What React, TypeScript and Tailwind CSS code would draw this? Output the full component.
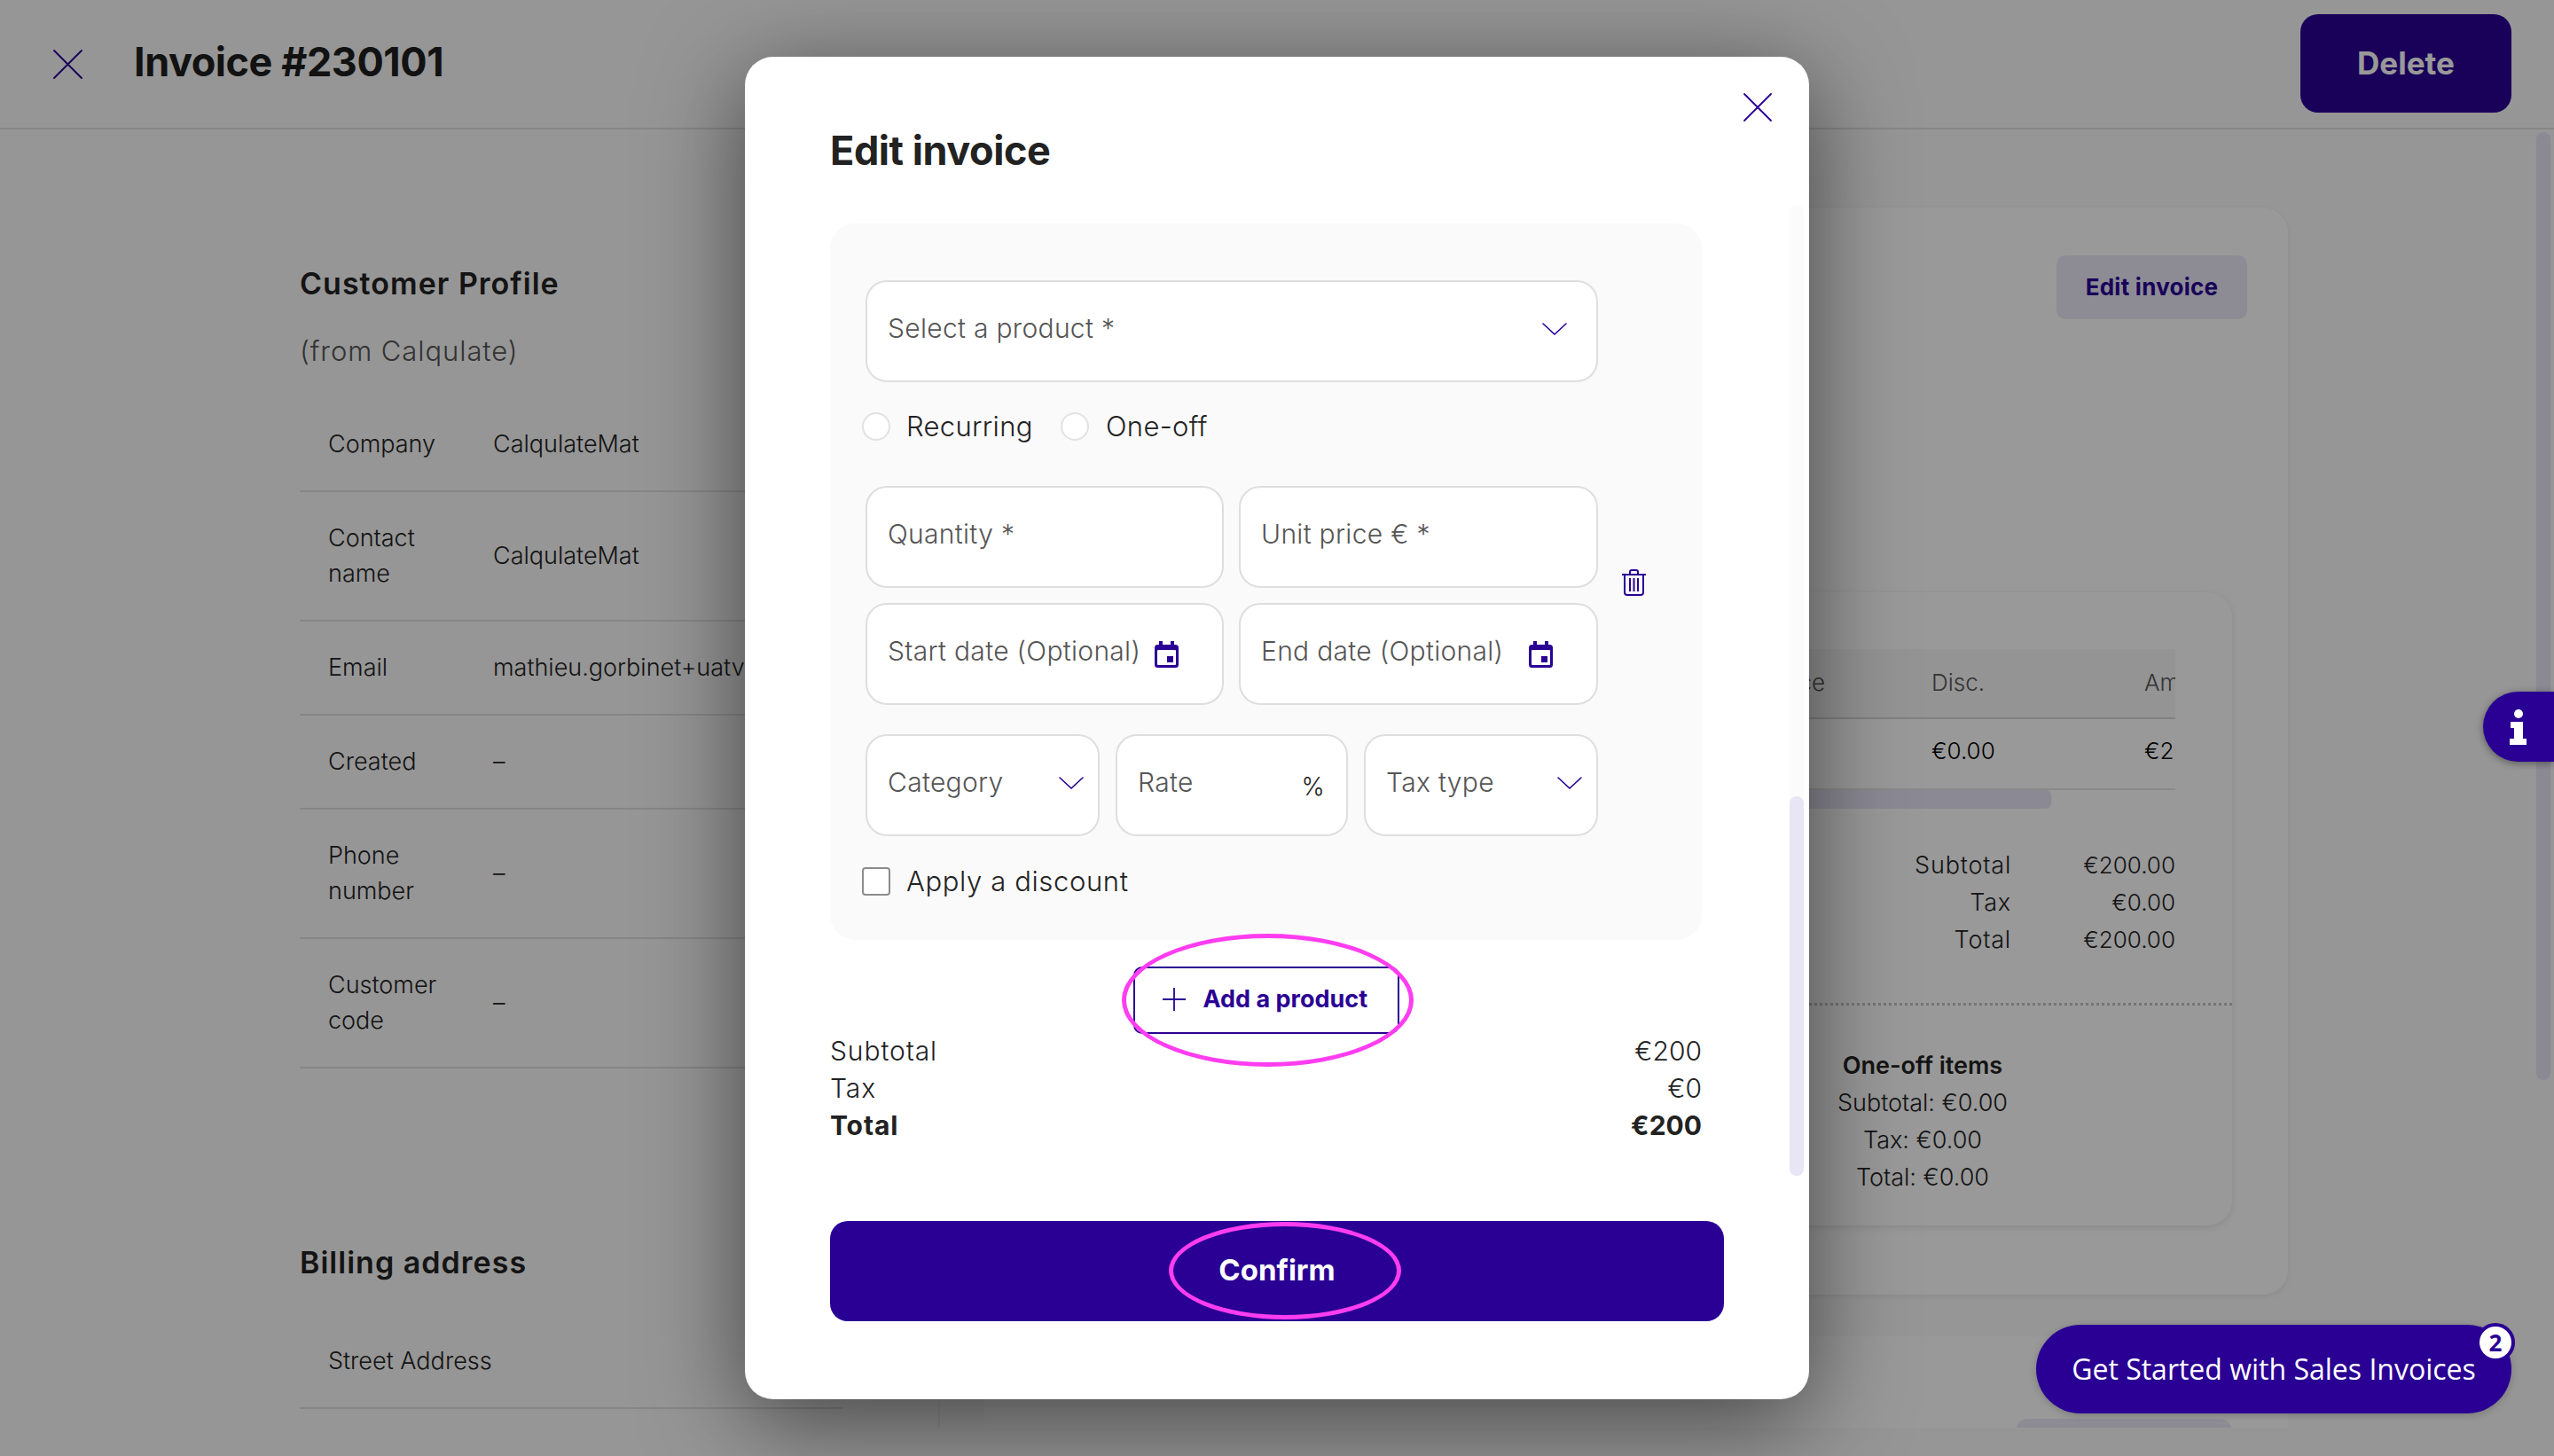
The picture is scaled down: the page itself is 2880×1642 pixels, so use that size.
function CloseIcon({ className }: { className: string }) {
  return (
    <svg viewBox="0 0 32 32" className={className} fill="none" stroke="#2a0094" strokeWidth="1.8" strokeLinecap="round">
      <path d="M1 1 31 31M31 1 1 31" />
    </svg>
  );
}

function Chevron() {
  return (
    <svg viewBox="0 0 28 14" className="h-[14px] w-[28px] shrink-0" fill="none" stroke="#2a0094" strokeWidth="1.6" strokeLinecap="round">
      <path d="M1 1 14 13 27 1" />
    </svg>
  );
}

function CalendarIcon({ className = "" }: { className?: string }) {
  return (
    <svg viewBox="0 0 27 30" className={`h-[30px] w-[27px] shrink-0 ${className}`}>
      <path fill="#2a0094" d="M5 0h4v4h9V0h4v4h1.5A3.5 3.5 0 0 1 27 7.5v19a3.5 3.5 0 0 1-3.5 3.5h-20A3.5 3.5 0 0 1 0 26.500v-19A3.500 3.500 0 0 1 3.500 4H5z" />
      <rect x="3" y="10" width="21" height="17" rx="1" fill="#fff" />
      <rect x="14" y="17" width="7" height="7" fill="#2a0094" />
    </svg>
  );
}

function TrashIcon() {
  return (
    <svg viewBox="0 0 27 30" className="h-[30px] w-[27px]" fill="none" stroke="#2a0094" strokeWidth="2">
      <path d="M0 6h27M9 6V3a2 2 0 0 1 2-2h5a2 2 0 0 1 2 2v3M3 6v20a3 3 0 0 0 3 3h15a3 3 0 0 0 3-3V6M9 10v15M13.500 10v15M18 10v15" />
    </svg>
  );
}

function Field({ label, children }: { label: string; children?: React.ReactNode }) {
  return (
    <div className="flex h-[115px] items-center justify-between rounded-[24px] border-2 border-[#dedede] bg-white pb-[6px] pl-[23px] text-[30px] font-light tracking-[0.01em] text-[#555]">
      <span className="whitespace-nowrap">{label}</span>
      {children}
    </div>
  );
}

function ProfileRow({ label, value, tall = false, nowrap = false }: { label: string; value: string; tall?: boolean; nowrap?: boolean }) {
  return (
    <div className={`flex items-center border-b-2 border-[#dfdfdf] pl-[32px] text-[27px] font-light leading-[40px] text-[#222] ${tall ? "h-[146px]" : "h-[106px]"}`}>
      <div className={`w-[186px] shrink-0 pr-[20px] ${nowrap ? "whitespace-nowrap" : ""}`}>{label}</div>
      <div className="whitespace-nowrap">{value}</div>
    </div>
  );
}

function TotalRow({ label, value, bold = false }: { label: string; value: string; bold?: boolean }) {
  return (
    <div className={`flex h-[42px] items-center justify-between text-[30px] text-[#222] ${bold ? "font-bold" : "font-light"}`}>
      <span className="tracking-[0.03em]">{label}</span>
      <span>{value}</span>
    </div>
  );
}

function EditModal() {
  return (
    <div className="absolute left-[840px] top-[64px] h-[1514px] w-[1200px] rounded-[32px] bg-white pl-[96px] pt-[83px] shadow-[0_24px_110px_rgba(0,0,0,0.55)]">
      <CloseIcon className="absolute left-[1126px] top-[41px] h-[32px] w-[32px]" />
      <div className="absolute left-[1178px] top-[167px] h-[1095px] w-[16px] rounded-full bg-[#fbfbfb]">
        <div className="ml-0 mt-[667px] h-[428px] w-[16px] rounded-full bg-[#e8e5f5]" />
      </div>

      <h2 className="text-[45px] font-bold leading-[46px] tracking-[-0.01em] text-[#222]">Edit invoice</h2>

      <div className="mt-[59px] h-[808px] w-[983px] rounded-[28px] bg-[#fafafa] pl-[40px] pt-[64px]">
        <div className="w-[826px]">
          <div className="[&>div]:pr-[33px]">
            <Field label="Select a product *">
              <Chevron />
            </Field>
          </div>
        </div>

        <div className="-ml-[4px] mt-[34px] flex h-[32px] items-center text-[31px] font-light tracking-[0.01em] text-[#222]">
          <span className="h-[32px] w-[32px] rounded-full border-2 border-[#e2e2e2] bg-white" />
          <span className="ml-[18px] w-[146px]">Recurring</span>
          <span className="ml-[28px] h-[32px] w-[32px] rounded-full border-2 border-[#e2e2e2] bg-white" />
          <span className="ml-[19px]">One-off</span>
        </div>

        <div className="mt-[51px] flex">
          <div className="grid w-[826px] grid-cols-[404px_405px] gap-[17px]">
            <Field label="Quantity *" />
            <Field label="Unit price € *" />
            <div className="[&>div]:pr-[49px]">
              <Field label="Start date (Optional)">
                <CalendarIcon className="mt-[6px]" />
              </Field>
            </div>
            <div className="[&>div]:pr-[49px]">
              <Field label="End date (Optional)">
                <CalendarIcon className="mt-[6px]" />
              </Field>
            </div>
          </div>
          <div className="ml-[27px] mt-[94px]">
            <TrashIcon />
          </div>
        </div>

        <div className="mt-[33px] grid w-[826px] grid-cols-[264px_262px_264px] gap-[18px]">
          <div className="[&>div]:pr-[16px]">
            <Field label="Category">
              <Chevron />
            </Field>
          </div>
          <div className="[&>div]:pr-[24px]">
            <Field label="Rate">
              <span className="mt-[8px] text-[28px] text-[#222]">%</span>
            </Field>
          </div>
          <div className="[&>div]:pr-[16px]">
            <Field label="Tax type">
              <Chevron />
            </Field>
          </div>
        </div>

        <div className="-ml-[4px] mt-[35px] flex h-[32px] items-center text-[31px] font-light tracking-[0.02em] text-[#222]">
          <span className="h-[32px] w-[32px] rounded-[4px] border-2 border-[#8c8c8c] bg-white" />
          <span className="ml-[18px]">Apply a discount</span>
        </div>
      </div>

      <div className="mt-[30px] flex w-[983px] justify-center">
        <div className="relative">
          <div className="flex h-[76px] w-[300px] items-center rounded-[10px] border-2 border-[#2a0094] bg-white pb-[2px] pl-[31px] text-[27px] font-bold text-[#2a0094]">
            <svg viewBox="0 0 26 26" className="h-[26px] w-[26px]" fill="none" stroke="#2a0094" strokeWidth="1.800">
              <path d="M13 0v26M0 13h26" />
            </svg>
            <span className="ml-[20px] whitespace-nowrap">Add a product</span>
          </div>
          <div className="absolute -left-[13px] -top-[37px] h-[150px] w-[329px] rounded-[50%] border-[5px] border-[#ff3df0]" />
        </div>
      </div>

      <div className="-mt-[2px] w-[983px]">
        <TotalRow label="Subtotal" value="€200" />
        <TotalRow label="Tax" value="€0" />
        <TotalRow label="Total" value="€200" bold />
      </div>

      <div className="relative mt-[87px] flex h-[113px] w-[1008px] items-center justify-center rounded-[20px] bg-[#2a0094] pb-[2px] text-[33px] font-bold text-white">
        Confirm
        <div className="absolute left-[382px] top-[1px] h-[110px] w-[262px] rounded-[50%] border-[5px] border-[#ff3df0]" />
      </div>
    </div>
  );
}

function InvoicePanel() {
  return (
    <div className="h-[1464px] flex-1 overflow-hidden pl-[50px] pt-[88px]">
      <div className="h-[1226px] w-[1470px] rounded-[28px] bg-white pr-[63px] pt-[54px] shadow-[0_2px_6px_rgba(0,0,0,0.08)]">
        <div className="flex justify-end">
          <div className="mr-[-17px] flex h-[72px] w-[215px] items-center justify-center rounded-[10px] bg-[#eceaf8] pb-[2px] text-[26px] font-bold tracking-[0.01em] text-[#2a0094]">
            Edit invoice
          </div>
        </div>

        <div className="ml-[60px] mt-[308px] h-[714px] rounded-[28px] bg-white pt-[64px] text-[#222] shadow-[0_2px_8px_rgba(0,0,0,0.1)]">
          <div className="mr-[64px] flex h-[79px] items-center overflow-hidden whitespace-nowrap border-b-2 border-[#d8d8d8] bg-[#f7f7f7] pb-[2px] text-[26px] font-light text-[#555]">
            <div className="w-[888px] shrink-0 text-right">Unit price</div>
            <div className="ml-[120px] w-[240px] shrink-0">Disc.</div>
            <div className="shrink-0">Amount</div>
          </div>
          <div className="mr-[64px] flex h-[80px] items-center overflow-hidden whitespace-nowrap border-b-2 border-[#e4e4e4] pb-[8px] text-[26px] font-light text-black">
            <div className="w-[888px] shrink-0" />
            <div className="ml-[120px] w-[240px] shrink-0">€0.00</div>
            <div className="shrink-0">€200.00</div>
          </div>
          <div className="h-[21px] w-[1143px] rounded-[6px] bg-[#e8e5f5]" />

          <div className="mr-[64px] mt-[43px] text-[27px] font-light leading-[42px]">
            <div className="flex justify-end"><span className="tracking-[0.03em]">Subtotal</span><span className="w-[185px] text-right text-[26px]">€200.00</span></div>
            <div className="flex justify-end"><span className="tracking-[0.03em]">Tax</span><span className="w-[185px] text-right text-[26px]">€0.00</span></div>
            <div className="flex justify-end"><span className="tracking-[0.03em]">Total</span><span className="w-[185px] text-right text-[26px]">€200.00</span></div>
          </div>

          <div className="mt-[50px] border-t-[3px] border-dotted border-[#c4c4c4]" />

          <div className="ml-[798px] mt-[47px] w-[400px] text-center text-[27px] font-light leading-[42px]">
            <div className="font-semibold">One-off items</div>
            <div>Subtotal: €0.00</div>
            <div>Tax: €0.00</div>
            <div>Total: €0.00</div>
          </div>
        </div>
      </div>

      <div className="mt-[47px] h-[200px] w-[1470px] rounded-[28px] bg-white pl-[1164px] pt-[93px]">
        <div className="h-[60px] w-[242px] rounded-[12px] bg-[#eceaf8]" />
      </div>
    </div>
  );
}

export default function App() {
  return (
    <div className="relative h-[1642px] w-[2880px] overflow-hidden bg-[#fafafa] font-['Inter','Noto_Sans',sans-serif]">
      <header className="flex h-[146px] items-center border-b-2 border-[#dfdfdf] pl-[60px] pr-[48px]">
        <CloseIcon className="h-[33px] w-[33px]" />
        <h1 className="-mt-[4px] ml-[58px] text-[45px] font-bold tracking-[-0.01em] text-[#1f1f1f]">Invoice #230101</h1>
        <div className="ml-auto mt-[-1px] flex h-[111px] w-[238px] items-center justify-center rounded-[20px] bg-[#2a0094] text-[35px] font-bold text-white">
          Delete
        </div>
      </header>

      <div className="flex">
        <div className="h-[1464px] w-[1060px] shrink-0 overflow-hidden border-r-2 border-[#eeeeee] pl-[338px] pt-[154px]">
          <div className="w-[612px]">
            <h3 className="mb-[2px] text-[34px] font-semibold leading-[40px] tracking-[0.03em] text-[#222]">Customer Profile</h3>
            <p className="mt-[36px] text-[31px] font-light leading-[40px] tracking-[0.03em] text-[#555]">(from Calqulate)</p>
            <div className="mt-[33px]">
              <ProfileRow label="Company" value="CalqulateMat" />
              <ProfileRow label="Contact name" value="CalqulateMat" tall />
              <ProfileRow label="Email" value="mathieu.gorbinet+uatvat@calqulate.com" />
              <ProfileRow label="Created" value="–" />
              <ProfileRow label="Phone number" value="–" tall />
              <ProfileRow label="Customer code" value="–" tall />
            </div>
            <h3 className="mt-[199px] text-[34px] font-semibold leading-[40px] tracking-[0.03em] text-[#222]">Billing address</h3>
            <div className="mt-[39px]">
              <ProfileRow label="Street Address" value="" nowrap />
            </div>
          </div>
        </div>
        <InvoicePanel />
      </div>

      <div className="absolute left-[2860px] top-[149px] h-[1069px] w-[16px] rounded-full bg-[#e8e5f5]" />

      <div className="absolute inset-0 bg-black/40" />

      <div className="absolute left-[2800px] top-[780px] flex h-[79px] w-[80px] items-center rounded-l-full bg-[#2a0094] pl-[28px] shadow-[0_2px_8px_rgba(0,0,0,0.4)]">
        <svg viewBox="0 0 24 40" className="h-[40px] w-[24px]" fill="#fff">
          <circle cx="12" cy="5" r="5" />
          <path d="M3 14h14v19h4v7H2v-7h5V21H3z" />
        </svg>
      </div>

      <div className="absolute left-[2296px] top-[1494px] flex h-[100px] w-[536px] items-center justify-center rounded-full bg-[#2a0094] font-['Open_Sans',sans-serif] text-[32px] text-white shadow-[0_2px_8px_rgba(0,0,0,0.2)]">
        Get Started with Sales Invoices
        <div className="absolute -right-[4px] -top-[2px] flex h-[44px] w-[44px] items-center justify-center rounded-full border-[4px] border-[#2a0094] bg-white text-[26px] font-bold text-[#2a0094]">
          2
        </div>
      </div>

      <EditModal />
    </div>
  );
}
